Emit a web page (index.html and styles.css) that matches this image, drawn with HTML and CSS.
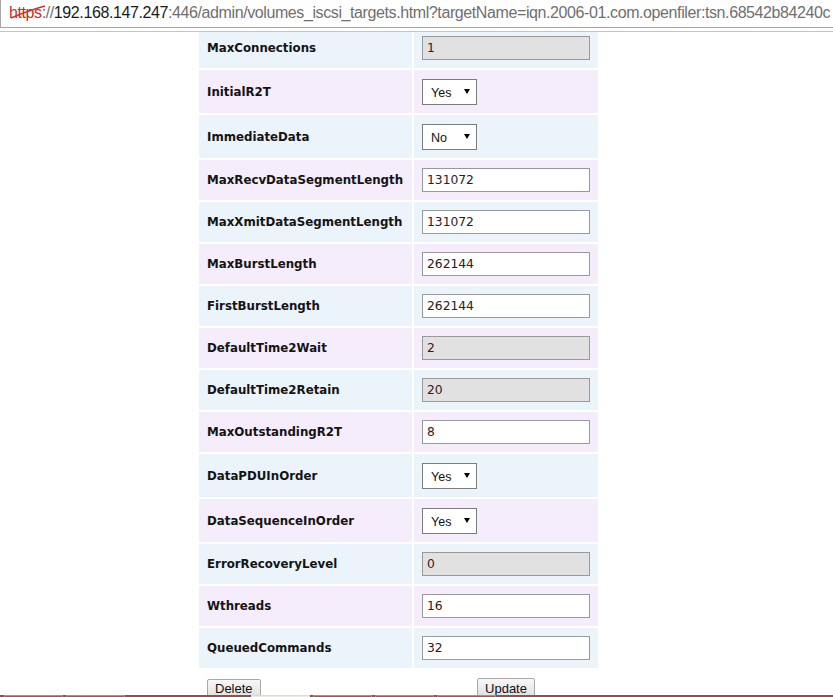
FILE: index.html
```html
<!DOCTYPE html>
<html>
<head>
<meta charset="utf-8">
<title>iSCSI Target</title>
<link rel="stylesheet" href="styles.css">
</head>
<body>
<div class="urlbar">
  <div class="url">
    <span class="scheme">https</span><span class="dim">://</span><span class="host">192.168.147.247</span><span class="dim">:446/admin/volumes_iscsi_targets.html?targetName=iqn.2006-01.com.openfiler:tsn.68542b84240c</span>
    <svg class="strike" width="40" height="20" viewBox="0 0 40 20"><path d="M2 14 C 14 9, 24 5, 36 2" fill="none" stroke="#d2342c" stroke-width="1.6"/></svg>
  </div>
</div>
<div class="sep"></div>
<div class="viewport">
  <div class="page">
    <table class="params">
      <colgroup><col class="c-label"><col class="c-value"></colgroup>
      <tr class="in blue"><td class="label">MaxConnections</td><td class="value"><input class="field" type="text" value="1" disabled></td></tr>
      <tr class="sel purple"><td class="label">InitialR2T</td><td class="value"><span class="selwrap"><select class="choice"><option>Yes</option><option>No</option></select><svg class="arrow" width="6" height="5" viewBox="0 0 6 5"><path d="M0 0 H6 L3 5 Z" fill="#000"/></svg></span></td></tr>
      <tr class="sel blue"><td class="label">ImmediateData</td><td class="value"><span class="selwrap"><select class="choice"><option>No</option><option>Yes</option></select><svg class="arrow" width="6" height="5" viewBox="0 0 6 5"><path d="M0 0 H6 L3 5 Z" fill="#000"/></svg></span></td></tr>
      <tr class="in purple"><td class="label">MaxRecvDataSegmentLength</td><td class="value"><input class="field" type="text" value="131072"></td></tr>
      <tr class="in blue"><td class="label">MaxXmitDataSegmentLength</td><td class="value"><input class="field" type="text" value="131072"></td></tr>
      <tr class="in purple"><td class="label">MaxBurstLength</td><td class="value"><input class="field" type="text" value="262144"></td></tr>
      <tr class="in blue"><td class="label">FirstBurstLength</td><td class="value"><input class="field" type="text" value="262144"></td></tr>
      <tr class="in purple"><td class="label">DefaultTime2Wait</td><td class="value"><input class="field" type="text" value="2" disabled></td></tr>
      <tr class="in blue"><td class="label">DefaultTime2Retain</td><td class="value"><input class="field" type="text" value="20" disabled></td></tr>
      <tr class="in purple"><td class="label">MaxOutstandingR2T</td><td class="value"><input class="field" type="text" value="8"></td></tr>
      <tr class="sel blue"><td class="label">DataPDUInOrder</td><td class="value"><span class="selwrap"><select class="choice"><option>Yes</option><option>No</option></select><svg class="arrow" width="6" height="5" viewBox="0 0 6 5"><path d="M0 0 H6 L3 5 Z" fill="#000"/></svg></span></td></tr>
      <tr class="sel purple"><td class="label">DataSequenceInOrder</td><td class="value"><span class="selwrap"><select class="choice"><option>Yes</option><option>No</option></select><svg class="arrow" width="6" height="5" viewBox="0 0 6 5"><path d="M0 0 H6 L3 5 Z" fill="#000"/></svg></span></td></tr>
      <tr class="in blue"><td class="label">ErrorRecoveryLevel</td><td class="value"><input class="field" type="text" value="0" disabled></td></tr>
      <tr class="in purple"><td class="label">Wthreads</td><td class="value"><input class="field" type="text" value="16"></td></tr>
      <tr class="in blue"><td class="label">QueuedCommands</td><td class="value"><input class="field" type="text" value="32"></td></tr>
    </table>
    <div class="actions">
      <div class="act-left"><button class="btn" type="button">Delete</button></div>
      <div class="act-right"><button class="btn" type="button">Update</button></div>
    </div>
  </div>
  <div class="tabstrip">
    <span class="tab"></span>
    <span class="tab gap"></span>
    <span class="tab active"></span>
    <span class="tab"></span>
    <span class="tab"></span>
    <span class="tab"></span>
  </div>
</div>
</body>
</html>
```
FILE: styles.css
```css
* { box-sizing: border-box; }
html, body { margin: 0; padding: 0; background: #fff; }
body { width: 833px; height: 697px; overflow: hidden; font-family: "DejaVu Sans", Verdana, sans-serif; }

.urlbar {
  height: 28px;
  border-left: 1px solid #a8a8a8;
  border-bottom: 1px solid #a6a6a6;
  background: #fff;
}
.url {
  position: relative;
  padding: 3px 0 0 8px;
  font-family: "Liberation Sans", Arial, sans-serif;
  font-size: 16px;
  letter-spacing: -0.4px;
  line-height: 20px;
  white-space: nowrap;
  color: #707070;
}
.scheme { color: #c0302a; }
.dim { color: #6f6f6f; }
.host { color: #1a1a1a; }
.strike { position: absolute; left: 8px; top: 4px; }

.sep { height: 4px; border-bottom: 1px solid #c4c4c4; margin-top: 0; }

.viewport { height: 665px; overflow: hidden; display: flex; flex-direction: column; }
.page { padding-left: 197px; }

.params {
  table-layout: fixed;
  width: 403px;
  border-collapse: separate;
  border-spacing: 2px;
  margin-top: -6px;
}
.c-label { width: 213px; }
.c-value { width: 184px; }
.params td { padding: 0 8px; vertical-align: middle; }
tr.in td { height: 40px; }
tr.sel td { height: 43px; }
tr.blue td { background: #ebf3fb; }
tr.purple td { background: #f5ecfc; }

.label {
  font-family: "DejaVu Sans", Verdana, sans-serif;
  font-weight: bold;
  font-size: 11.8px;
  color: #141414;
  white-space: nowrap;
}
.value { font-size: 0; }

.field {
  display: block;
  width: 168px;
  height: 24px;
  margin: 0;
  padding: 0 4px;
  border: 1px solid #999;
  border-radius: 0;
  background: #fff;
  font-family: "DejaVu Sans", Verdana, sans-serif;
  font-size: 12.3px;
  color: #2a2020;
  outline: none;
}
.field:disabled { background: #e1e1e1; color: #2a2020; -webkit-text-fill-color: #2a2020; opacity: 1; }

.selwrap { position: relative; display: inline-block; vertical-align: middle; }
.choice {
  -webkit-appearance: none;
  appearance: none;
  display: block;
  width: 55px;
  height: 26px;
  margin: 0;
  padding: 2px 0 0 8px;
  border: 1px solid #7c7c7c;
  border-radius: 0;
  background: #fff;
  font-family: "Liberation Sans", Arial, sans-serif;
  font-size: 12.5px;
  color: #111;
}
.arrow { position: absolute; right: 7px; top: 10px; pointer-events: none; }

.actions {
  display: grid;
  grid-template-columns: 213px 184px;
  column-gap: 2px;
  margin: 8px 0 0 2px;
  height: 17px;
  overflow: hidden;
}
.act-left { padding-left: 8px; }
.act-right { display: flex; justify-content: center; }
.btn {
  height: 21px;
  margin: 0;
  padding: 0 7px;
  border: 1px solid #a9a9a9;
  border-radius: 2px;
  background: linear-gradient(#f7f7f7, #dedede);
  font-family: "Liberation Sans", Arial, sans-serif;
  font-size: 13px;
  color: #111;
  line-height: 18px;
}

.tabstrip {
  height: 2px;
  background: #9e4a46;
  display: flex;
  padding-left: 4px;
  gap: 3px;
}
.tab {
  width: 59px;
  height: 2px;
  border: 1px solid #c4837f;
  border-bottom: none;
  background: #a8554f;
}
.tab.gap { margin-right: 123px; }
.tab.active { background: #f3e8e8; border-color: #e8d6d6; }
```
